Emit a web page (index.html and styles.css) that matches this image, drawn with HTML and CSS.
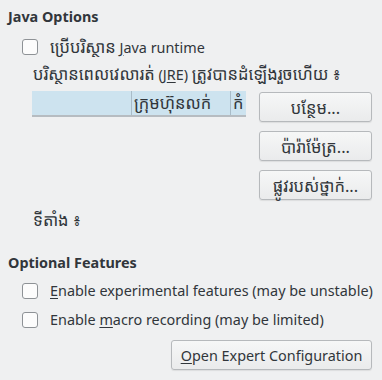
FILE: index.html
```html
<!doctype html>
<html lang="km">
<head>
	<meta charset="UTF-8">
	<title>Advanced</title>
	<link rel="stylesheet" href="styles.css">
</head>
<body>
	<div class="page">
		<h2 class="group-title">Java Options</h2>
		<label class="check">
			<span class="box"></span>
			<span><span class="km">ប្រើបរិស្ថាន</span> <u>J</u>ava runtime</span>
		</label>
		<p class="sub"><span class="km">បរិស្ថានពេលវេលារត់</span> (J<u>R</u>E) <span class="km">ត្រូវបានដំឡើងរួចហើយ ៖</span></p>
		<div class="jre">
			<div class="table">
				<div class="thead">
					<span class="col col1"></span>
					<span class="col col2 km">ក្រុមហ៊ុនលក់</span>
					<span class="col col3 km">កំ</span>
				</div>
			</div>
			<div class="buttons">
				<button class="btn km">បន្ថែម...</button>
				<button class="btn km">ប៉ារ៉ាម៉ែត្រ...</button>
				<button class="btn km">ផ្លូវរបស់ថ្នាក់...</button>
			</div>
		</div>
		<p class="sub location km">ទីតាំង ៖</p>

		<h2 class="group-title second">Optional Features</h2>
		<label class="check">
			<span class="box"></span>
			<span><u>E</u>nable experimental features (may be unstable)</span>
		</label>
		<label class="check">
			<span class="box"></span>
			<span>Enable <u>m</u>acro recording (may be limited)</span>
		</label>
		<div class="foot">
			<button class="btn wide"><u>O</u>pen Expert Configuration</button>
		</div>
	</div>
</body>
</html>
```

FILE: styles.css
```css
* { margin: 0; padding: 0; box-sizing: border-box; }
html, body { background: #eff0f1; }
body { font-family: "Noto Sans", "Noto Sans Khmer", "Khmer OS", sans-serif; font-size: 14.4px; color: #31363b; }
u { text-decoration: underline; text-underline-offset: 2px; }
.km { font-size: 16.5px; }

.page { width: 382px; height: 380px; padding: 7px 10px 0 8px; }

.group-title { font-size: 14.4px; font-weight: bold; line-height: 20px; height: 20px; }
.group-title.second { margin-top: 21px; }

.check { display: flex; align-items: center; gap: 12px; margin: 10px 0 0 14px; line-height: 20px; height: 20px; white-space: nowrap; }
.second + .check { margin-top: 8px; }
.check + .check { margin-top: 9px; }
.box { width: 16px; height: 16px; border: 1px solid #8e9296; border-radius: 3px; background: #fcfcfc; flex: none; }

.sub { margin: 5px 0 0 25px; line-height: 24px; height: 24px; white-space: nowrap; }

.jre { display: flex; justify-content: space-between; margin: 5px 0 0 24px; }
.table { width: 214px; height: 26px; }
.thead { display: flex; height: 24px; background: #cde3ef; box-shadow: 0 2px 0 #b6bcc1; overflow: hidden; }
.col { height: 24px; line-height: 24px; padding-left: 2px; white-space: nowrap; overflow: hidden; border-right: 1px solid #a9bcc8; }
.col1 { width: 100px; }
.col2 { width: 99px; }
.col3 { width: 15px; border-right: none; }

.buttons { display: flex; flex-direction: column; gap: 9px; width: 113px; margin-top: 1px; }
.btn { height: 30px; border: 1px solid #b6b9bc; border-radius: 3px; background: linear-gradient(#f6f7f7, #eaebec); font-family: inherit; font-size: 14.4px; color: #31363b; box-shadow: 0 1px 1px rgba(0,0,0,0.08); }
.btn.km { font-size: 16.5px; }
.location { margin-top: 8px; }

.foot { display: flex; justify-content: flex-end; margin-top: 10px; }
.btn.wide { width: 201px; height: 30px; white-space: nowrap; }
```
